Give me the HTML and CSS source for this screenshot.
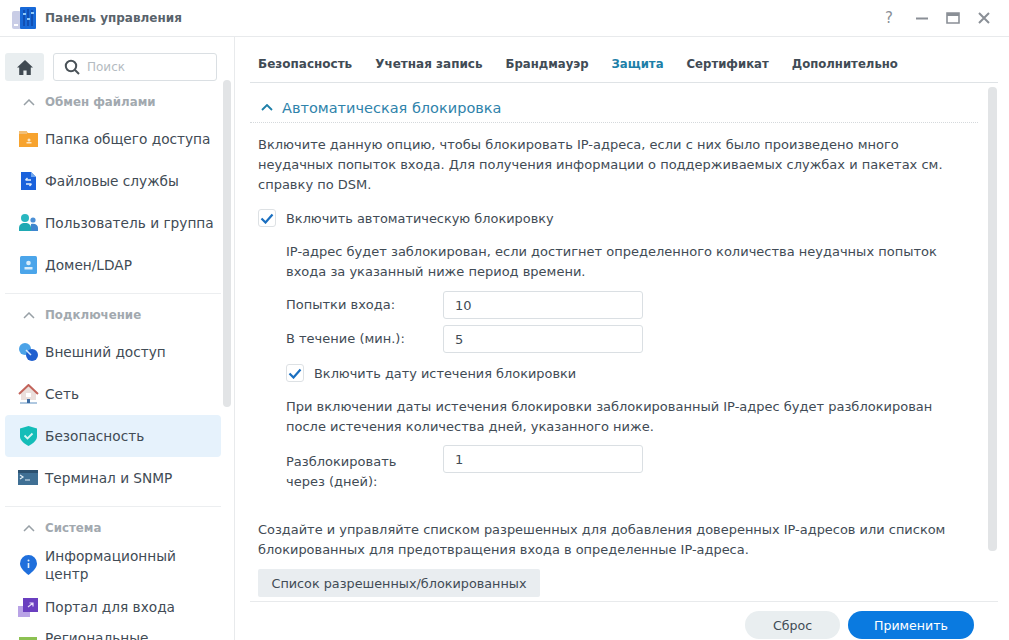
FILE: index.html
```html
<!DOCTYPE html>
<html lang="ru">
<head>
    <meta charset="UTF-8">
    <title>Панель управления</title>
    <link rel="stylesheet" href="styles.css">
</head>
<body>
    <div class="window">
        <header class="titlebar">
            <svg class="app-logo" width="26" height="26" viewBox="0 0 26 26">
                <rect x="1" y="6" width="9" height="18" rx="2" fill="#c9cde6"/>
                <rect x="3" y="19" width="4" height="2" fill="#fff"/>
                <rect x="9" y="2" width="16" height="22" rx="1" fill="#1769d8"/>
                <path d="M13 5v16M17 4v17M21 5v16" stroke="#0c3f9c" stroke-width="1.2"/>
                <path d="M12 9h3M16 14h3M20 8h3" stroke="#8fc8f5" stroke-width="2"/>
            </svg>
            <span class="app-title">Панель управления</span>
            <div class="win-btns">
                <span class="win-help">?</span>
                <svg width="14" height="14" viewBox="0 0 14 14"><path d="M1 7.5h12" stroke="#8a8f96" stroke-width="2"/></svg>
                <svg width="14" height="14" viewBox="0 0 14 14"><path d="M1 2h12v10H1z" fill="none" stroke="#8a8f96" stroke-width="1.6"/><path d="M1 3.5h12" stroke="#8a8f96" stroke-width="3"/></svg>
                <svg width="14" height="14" viewBox="0 0 14 14"><path d="M2 2l10 10M12 2L2 12" stroke="#8a8f96" stroke-width="2"/></svg>
            </div>
        </header>
        <div class="body">
            <aside class="sidebar">
                <div class="search-row">
                    <button class="home-btn">
                        <svg width="16" height="15" viewBox="0 0 16 15"><path d="M8 0L0 7.5h2.2V15h4.2v-4.5h3.2V15h4.2V7.5H16z" fill="#404a52"/></svg>
                    </button>
                    <div class="search">
                        <svg width="16" height="16" viewBox="0 0 16 16"><circle cx="7" cy="7" r="5.2" fill="none" stroke="#4a5258" stroke-width="2"/><path d="M11 11l4 4" stroke="#4a5258" stroke-width="2"/></svg>
                        <span>Поиск</span>
                    </div>
                </div>
                <div class="group-title">
                    <svg class="chev" width="12" height="7" viewBox="0 0 12 7"><path d="M1 6l5-5 5 5" fill="none" stroke="#98a0a6" stroke-width="1.5"/></svg>
                    Обмен файлами
                </div>
                <div class="nav-item">
                    <svg width="21" height="20" viewBox="0 0 21 20"><path d="M1 2h7l2 2h10v14H1z" fill="#f7a32e"/><rect x="1" y="2" width="8" height="3" fill="#f2bf76"/><path d="M8.500 14.500h5v-1.500h-5z" fill="#fde6c2"/><circle cx="11" cy="11" r="1.500" fill="#fde6c2"/></svg>
                    Папка общего доступа
                </div>
                <div class="nav-item">
                    <svg width="21" height="20" viewBox="0 0 21 20"><path d="M3 1h10l5 5v13H3z" fill="#1a62dc"/><path d="M13 1l5 5h-5z" fill="#6fa6ee"/><path d="M13 9H7.500M7.500 9l2-2M8 13h5.500M13.500 13l-2 2" fill="none" stroke="#e4f0fc" stroke-width="1.400"/></svg>
                    Файловые службы
                </div>
                <div class="nav-item">
                    <svg width="21" height="20" viewBox="0 0 21 20"><circle cx="7" cy="5" r="4" fill="#29b7c0"/><circle cx="15" cy="7" r="2.600" fill="#4a8fd6"/><path d="M1 18v-3c0-3 2-5 6-5s6 2 6 5v3z" fill="#1fa9b3"/><path d="M13 11c4-1 7 1 7 4v3h-7z" fill="#3f86cf"/></svg>
                    Пользователь и группа
                </div>
                <div class="nav-item">
                    <svg width="21" height="20" viewBox="0 0 21 20"><rect x="2" y="1" width="17" height="18" rx="1.500" fill="#4ba5ea"/><circle cx="10.500" cy="8" r="2.300" fill="#d8edfb"/><rect x="6.500" y="12" width="8" height="2.500" fill="#d8edfb"/></svg>
                    Домен/LDAP
                </div>
                <div class="divider"></div>
                <div class="group-title">
                    <svg class="chev" width="12" height="7" viewBox="0 0 12 7"><path d="M1 6l5-5 5 5" fill="none" stroke="#98a0a6" stroke-width="1.5"/></svg>
                    Подключение
                </div>
                <div class="nav-item">
                    <svg width="21" height="20" viewBox="0 0 21 20"><circle cx="7" cy="7" r="6" fill="#4ba3e8"/><circle cx="14" cy="13" r="6" fill="#1f5fcf"/><path d="M8 8l5 5" stroke="#d6e8fb" stroke-width="1.500"/></svg>
                    Внешний доступ
                </div>
                <div class="nav-item">
                    <svg width="21" height="20" viewBox="0 0 21 20"><path d="M10.500 1L1 10h2v6h15v-6h2z" fill="#eadfdc"/><path d="M1 10l9.500-9L20 10" fill="none" stroke="#c2635a" stroke-width="2"/><rect x="8" y="9" width="5" height="4" fill="#fff"/><path d="M2 19h17" stroke="#7ba3cb" stroke-width="1.200"/><rect x="9" y="15" width="3" height="4" fill="#3d6da3"/></svg>
                    Сеть
                </div>
                <div class="nav-item active">
                    <svg width="21" height="20" viewBox="0 0 21 20"><path d="M10.500 0l8.500 2.500v8c0 4-4 7-8.500 9.500C6 17.500 2 14.500 2 10.500v-8z" fill="#14bdb8"/><path d="M6.500 9.500l3 3 5-5" fill="none" stroke="#d5f5f3" stroke-width="1.800"/></svg>
                    Безопасность
                </div>
                <div class="nav-item">
                    <svg width="21" height="20" viewBox="0 0 21 20"><rect y="2" width="20" height="15" fill="#3f6f94"/><rect y="2" width="20" height="3" fill="#2c5170"/><path d="M2 7l3 2-3 2M7 12h5" fill="none" stroke="#e2eef6" stroke-width="1.200"/></svg>
                    Терминал и SNMP
                </div>
                <div class="divider"></div>
                <div class="group-title">
                    <svg class="chev" width="12" height="7" viewBox="0 0 12 7"><path d="M1 6l5-5 5 5" fill="none" stroke="#98a0a6" stroke-width="1.5"/></svg>
                    Система
                </div>
                <div class="nav-item">
                    <svg width="21" height="20" viewBox="0 0 21 20"><path d="M10.500 0a8.500 8.500 0 0 1 8.500 8.500c0 4-4 8-8.500 11.500C6 16.500 2 12.500 2 8.500A8.500 8.500 0 0 1 10.500 0z" fill="#1f6fdc"/><path d="M10.500 8v5" stroke="#e4f0fb" stroke-width="1.600"/><circle cx="10.500" cy="5.500" r="1" fill="#e4f0fb"/></svg>
                    <span>Информационный<br>центр</span>
                </div>
                <div class="nav-item">
                    <svg width="21" height="20" viewBox="0 0 21 20"><rect x="0" y="9" width="12" height="11" fill="#b9a3e6"/><rect x="5" y="1" width="15" height="14" fill="#6a3fc0"/><path d="M10 10l5-4M11.500 6H15v3.500" fill="none" stroke="#e8defa" stroke-width="1.200"/></svg>
                    Портал для входа
                </div>
                <div class="nav-item last">
                    <svg width="21" height="20" viewBox="0 0 21 20"><rect x="1" y="0" width="18" height="20" fill="#8cc152"/></svg>
                    <span>Региональные<br>параметры</span>
                </div>
                <div class="scroll-thumb side-thumb"></div>
            </aside>
            <main class="main">
                <nav class="tabs">
                    <span class="tab">Безопасность</span>
                    <span class="tab">Учетная запись</span>
                    <span class="tab tight">Брандмауэр</span>
                    <span class="tab tight current">Защита</span>
                    <span class="tab tight">Сертификат</span>
                    <span class="tab tight">Дополнительно</span>
                </nav>
                <div class="content">
                    <div class="section-head">
                        <svg width="12" height="7" viewBox="0 0 12 7"><path d="M1 6l5-5 5 5" fill="none" stroke="#1d7fa8" stroke-width="1.800"/></svg>
                        Автоматическая блокировка
                    </div>
                    <p class="text intro">Включите данную опцию, чтобы блокировать IP-адреса, если с них было произведено много неудачных попыток входа. Для получения информации о поддерживаемых службах и пакетах см. справку по DSM.</p>
                    <label class="check first-check">
                        <span class="box"><svg width="14" height="11" viewBox="0 0 14 11"><path d="M1.500 5.500l4 4 7-8" fill="none" stroke="#1a6fc0" stroke-width="2.200"/></svg></span>
                        Включить автоматическую блокировку
                    </label>
                    <div class="indent">
                        <p class="text desc">IP-адрес будет заблокирован, если достигнет определенного количества неудачных попыток входа за указанный ниже период времени.</p>
                        <div class="field"><span class="field-label">Попытки входа:</span><div class="input">10</div></div>
                        <div class="field"><span class="field-label">В течение (мин.):</span><div class="input">5</div></div>
                        <label class="check sub-check">
                            <span class="box"><svg width="14" height="11" viewBox="0 0 14 11"><path d="M1.500 5.500l4 4 7-8" fill="none" stroke="#1a6fc0" stroke-width="2.200"/></svg></span>
                            Включить дату истечения блокировки
                        </label>
                        <p class="text desc2">При включении даты истечения блокировки заблокированный IP-адрес будет разблокирован после истечения количества дней, указанного ниже.</p>
                        <div class="field top"><span class="field-label">Разблокировать<br>через (дней):</span><div class="input">1</div></div>
                    </div>
                    <p class="text allow">Создайте и управляйте списком разрешенных для добавления доверенных IP-адресов или списком блокированных для предотвращения входа в определенные IP-адреса.</p>
                    <button class="list-btn">Список разрешенных/блокированных</button>
                    <div class="scroll-thumb main-thumb"></div>
                </div>
                <footer class="footer">
                    <button class="btn reset">Сброс</button>
                    <button class="btn apply">Применить</button>
                </footer>
            </main>
        </div>
    </div>
</body>
</html>
```

FILE: styles.css
```css
* {
    box-sizing: border-box;
}
html, body {
    margin: 0;
    height: 100%;
    overflow: hidden;
}
body {
    font-family: "DejaVu Sans", sans-serif;
    font-size: 13px;
    color: #414b55;
    background: #fff;
}
.window {
    height: 640px;
    display: flex;
    flex-direction: column;
}
.titlebar {
    height: 37px;
    flex: none;
    display: flex;
    align-items: center;
    padding: 0 18px 0 11px;
    border-bottom: 1px solid #e8eaec;
}
.app-title {
    margin-left: 8px;
    font-weight: 700;
    font-size: 12px;
    color: #59636b;
}
.win-btns {
    margin-left: auto;
    display: flex;
    align-items: center;
    gap: 17px;
}
.win-help {
    font-size: 15px;
    color: #8a8f96;
    margin-right: 5px;
}
.body {
    flex: 1;
    display: flex;
    min-height: 0;
}
.sidebar {
    width: 235px;
    flex: none;
    padding: 0 5px;
    border-right: 1px solid #e8eaec;
    overflow: hidden;
    position: relative;
}
.search-row {
    display: flex;
    gap: 9px;
    padding-top: 16px;
}
.home-btn {
    width: 39px;
    height: 28px;
    border: none;
    border-radius: 3px;
    background: #e9eef0;
    display: flex;
    align-items: center;
    justify-content: center;
}
.search {
    width: 164px;
    height: 28px;
    border: 1px solid #dadfe3;
    border-radius: 3px;
    display: flex;
    align-items: center;
    gap: 7px;
    padding-left: 10px;
    color: #b4bbc1;
    font-size: 12px;
}
.group-title {
    height: 22px;
    display: flex;
    align-items: center;
    padding-left: 18px;
    margin-top: 10px;
    font-size: 11.8px;
    font-weight: 700;
    color: #a2a9af;
}
.chev {
    margin-right: 10px;
}
.nav-item {
    width: 216px;
    height: 42px;
    display: flex;
    align-items: center;
    gap: 6px;
    padding-left: 13px;
    border-radius: 4px;
    white-space: nowrap;
    font-size: 13.7px;
    line-height: 18px;
}
.group-title + .nav-item {
    margin-top: 5px;
}
.nav-item svg {
    flex: none;
}
.nav-item.active {
    background: #e6f2fc;
}
.nav-item.last {
    margin-top: -2px;
}
.divider {
    width: 216px;
    height: 1px;
    background: #eceef0;
    margin-top: 7px;
}
.scroll-thumb {
    position: absolute;
    width: 8px;
    border-radius: 4px;
    background: #e2e4e6;
}
.side-thumb {
    top: 43px;
    right: 3px;
    height: 327px;
}
.main {
    flex: 1;
    min-width: 0;
    display: flex;
    flex-direction: column;
    padding: 0 11px 0 15px;
}
.tabs {
    height: 46px;
    flex: none;
    display: flex;
    align-items: center;
    gap: 23px;
    padding: 9px 0 0 8px;
    border-bottom: 1px solid #dfe3e6;
    font-weight: 700;
    font-size: 12px;
}
.tab.tight {
    font-size: 11.7px;
}
.tab.current {
    color: #1d7fa8;
}
.content {
    flex: 1;
    min-height: 0;
    position: relative;
    padding: 0 8px;
}
.main-thumb {
    top: 4px;
    right: 1px;
    width: 9px;
    height: 464px;
}
.section-head {
    height: 40px;
    margin: 0 12px 0 -8px;
    padding: 10px 0 0 11px;
    display: flex;
    align-items: center;
    gap: 9px;
    font-size: 14.5px;
    color: #2f83ab;
    border-bottom: 1px dotted #d5d9dc;
}
.text {
    margin: 0;
    line-height: 20px;
    width: 700px;
    font-size: 13px;
}
.intro {
    margin-top: 12px;
}
.check {
    display: flex;
    align-items: center;
    gap: 10px;
    height: 20px;
    font-size: 12.9px;
}
.box {
    width: 18px;
    height: 18px;
    border: 1px solid #dde1e4;
    border-radius: 3px;
    display: flex;
    align-items: center;
    justify-content: center;
    flex: none;
}
.first-check {
    margin-top: 13px;
}
.indent {
    padding-left: 28px;
}
.indent .text {
    width: 665px;
}
.desc {
    margin-top: 14px;
}
.field {
    display: flex;
    align-items: center;
    margin-top: 6px;
}
.desc + .field {
    margin-top: 9px;
}
.field-label {
    width: 157px;
    line-height: 20px;
    flex: none;
}
.input {
    width: 200px;
    height: 28px;
    border: 1px solid #dadfe3;
    border-radius: 3px;
    padding-left: 11px;
    display: flex;
    align-items: center;
}
.sub-check {
    margin-top: 10px;
}
.desc2 {
    margin-top: 14px;
}
.field.top {
    margin-top: 8px;
    align-items: flex-start;
}
.field.top .field-label {
    padding-top: 7px;
}
.allow {
    margin-top: 28px;
    font-size: 12.95px;
}
.list-btn {
    margin-top: 9px;
    width: 282px;
    height: 28px;
    border: none;
    border-radius: 2px;
    background: #e9edf0;
    font: inherit;
    font-size: 12.8px;
    color: #414b55;
}
.footer {
    height: 39px;
    flex: none;
    margin-top: auto;
    border-top: 1px solid #e8eaec;
    display: flex;
    justify-content: flex-end;
    align-items: flex-start;
    gap: 8px;
    padding: 9px 24px 0 0;
}
.btn {
    height: 28px;
    border: none;
    border-radius: 14px;
    font: inherit;
    font-size: 12.6px;
}
.reset {
    width: 95px;
    background: #e9eef0;
    color: #414b55;
}
.apply {
    width: 126px;
    background: #0a7ae0;
    color: #fff;
}
```
